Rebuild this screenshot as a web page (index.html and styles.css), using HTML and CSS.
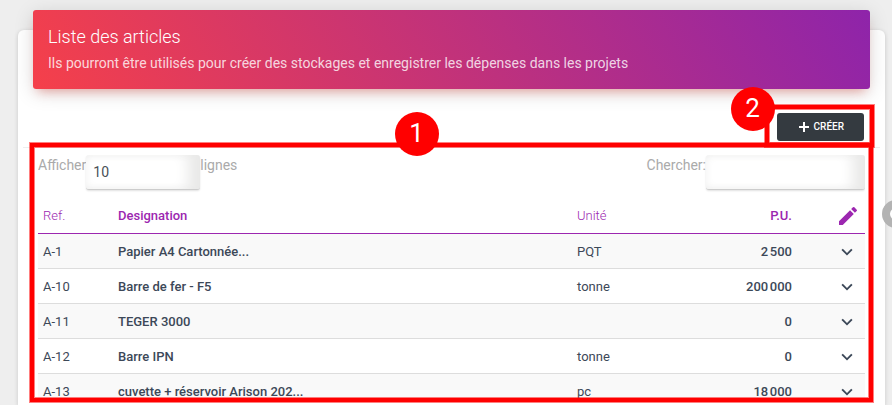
FILE: index.html
```html
<!DOCTYPE html>
<html lang="fr">
<head>
<meta charset="utf-8">
<meta name="viewport" content="width=device-width, initial-scale=1">
<title>Liste des articles</title>
<link rel="stylesheet" href="styles.css">
</head>
<body>
<svg class="symbols">
  <symbol id="chevron" viewBox="0 0 24 24"><path d="M6.4 7.6 12 13.2l5.6-5.6L19.4 9.4 12 16.8 4.6 9.4z"/></symbol>
</svg>
<main class="card">
  <header class="card-header">
    <h1 class="title">Liste des articles</h1>
    <p class="subtitle">Ils pourront être utilisés pour créer des stockages et enregistrer les dépenses dans les projets</p>
  </header>
  <div class="toolbar">
    <div class="create">
      <button class="create-button" type="button">
        <svg class="plus" viewBox="0 0 10 10" aria-hidden="true"><path d="M4 0h2v4h4v2H6v4H4V6H0V4h4z"/></svg>
        CRÉER
      </button>
      <span class="frame frame-create"></span>
      <span class="badge badge-create">2</span>
    </div>
  </div>
  <section class="list">
    <div class="list-content">
      <div class="filters">
        <div class="filter">
          <label for="length">Afficher</label>
          <select class="field length" id="length"><option>10</option><option>25</option></select>
          <span>lignes</span>
        </div>
        <div class="filter">
          <label for="search">Chercher:</label>
          <input class="field search" id="search" type="search">
        </div>
      </div>
      <table class="table">
        <thead>
          <tr>
            <th class="ref">Ref.</th>
            <th class="strong">Designation</th>
            <th class="unit">Unité</th>
            <th class="price strong">P.U.</th>
            <th class="action" aria-label="Modifier"><svg class="pencil" viewBox="0 0 24 24"><path d="M3 17.25V21h3.75L17.81 9.94l-3.75-3.75zM20.71 7.04a1 1 0 0 0 0-1.41l-2.34-2.34a1 1 0 0 0-1.41 0l-1.83 1.83 3.75 3.75z"/></svg></th>
          </tr>
        </thead>
        <tbody>
          <tr><td>A-1</td><td class="strong">Papier A4 Cartonnée...</td><td>PQT</td><td class="price strong">2&#8239;500</td><td class="action"><button class="menu" type="button" aria-label="Actions A-1"><svg class="chevron"><use href="#chevron"/></svg></button></td></tr>
          <tr><td>A-10</td><td class="strong">Barre de fer - F5</td><td>tonne</td><td class="price strong">200&#8239;000</td><td class="action"><button class="menu" type="button" aria-label="Actions A-10"><svg class="chevron"><use href="#chevron"/></svg></button></td></tr>
          <tr><td>A-11</td><td class="strong">TEGER 3000</td><td></td><td class="price strong">0</td><td class="action"><button class="menu" type="button" aria-label="Actions A-11"><svg class="chevron"><use href="#chevron"/></svg></button></td></tr>
          <tr><td>A-12</td><td class="strong">Barre IPN</td><td>tonne</td><td class="price strong">0</td><td class="action"><button class="menu" type="button" aria-label="Actions A-12"><svg class="chevron"><use href="#chevron"/></svg></button></td></tr>
          <tr><td>A-13</td><td class="strong">cuvette + réservoir Arison 202...</td><td>pc</td><td class="price strong">18&#8239;000</td><td class="action"><button class="menu" type="button" aria-label="Actions A-13"><svg class="chevron"><use href="#chevron"/></svg></button></td></tr>
        </tbody>
      </table>
    </div>
    <span class="frame frame-list"></span>
    <span class="badge badge-list">1</span>
  </section>
</main>
<span class="handle"></span>
</body>
</html>
```
FILE: styles.css
```css
* {
  box-sizing: border-box;
}

body {
  margin: 0;
  min-height: 100vh;
  padding: 30px 7px 0 18px;
  display: flex;
  overflow: hidden;
  position: relative;
  background: #eee;
  color: #3c4858;
  font: 400 13px/20px Roboto, sans-serif;
}

.symbols {
  display: none;
}

.card {
  flex: 1;
  min-width: 0;
  padding: 0 5px;
  border-radius: 6px 6px 0 0;
  background: #fff;
  box-shadow: 0 1px 4px rgba(0, 0, 0, .16);
}

.card-header {
  margin: -20px 10px 0;
  padding: 16px 15px 15px;
  border-radius: 3px;
  background: linear-gradient(60deg, #f5404a, #8e24aa);
  box-shadow: 0 4px 20px rgba(0, 0, 0, .14), 0 7px 10px -5px rgba(244, 67, 54, .4);
  color: #fff;
}

.title {
  margin: 0 0 5px;
  font-size: 18px;
  line-height: 22px;
  font-weight: 300;
}

.subtitle {
  margin: 0;
  font-size: 14px;
  line-height: 21px;
  color: rgba(255, 255, 255, .8);
}

.toolbar {
  display: flex;
  justify-content: flex-end;
  padding: 24px 16px 6px;
  border-bottom: 1px solid #eee;
}

.create {
  display: flex;
  position: relative;
  z-index: 2;
}

.create-button {
  display: flex;
  align-items: center;
  gap: 5px;
  height: 28px;
  padding: 0 20px 0 22px;
  border: 0;
  border-radius: 3px;
  background: #343a40;
  color: #fff;
  font: 500 10px/20px Roboto, sans-serif;
}

.plus {
  width: 10px;
  height: 10px;
  fill: #fff;
}

.list {
  position: relative;
  padding: 7px 15px 0;
}

.list-content {
  height: 243px;
  overflow: hidden;
}

.filters {
  display: flex;
  justify-content: space-between;
  height: 43px;
}

.filter {
  display: flex;
  align-items: flex-start;
  color: #aaa;
  font-size: 14px;
}

.field {
  height: 35px;
  padding: 0 7px;
  border: 0;
  border-bottom: 1px solid #ccc;
  border-radius: 3px;
  appearance: none;
  background: #fff;
  box-shadow: inset -18px 0 14px -6px #e9e9e8, inset 0 0 8px #f1f1f1, 0 1px 2px rgba(0, 0, 0, .12);
  color: #495057;
  font: 400 14px/20px Roboto, sans-serif;
}

.length {
  width: 114px;
}

.search {
  width: 159px;
}

.table {
  width: 100%;
  border-collapse: collapse;
  table-layout: fixed;
}

th,
td {
  height: 35px;
  padding: 2px 5px 0;
  border-bottom: 1px solid #ddd;
  text-align: left;
  font-weight: 400;
}

th {
  border-bottom-color: #9c27b0;
  color: #9c27b0;
  font-weight: 300;
}

tbody tr:nth-child(odd) {
  background: #f9f9f9;
}

.strong {
  font-weight: 500;
}

.ref {
  width: 75px;
}

.unit {
  width: 125px;
}

.price {
  width: 100px;
  text-align: right;
}

.action {
  width: 68px;
  text-align: right;
}

.pencil {
  display: block;
  width: 24px;
  height: 24px;
  margin-left: auto;
  fill: #9c27b0;
}

.menu {
  display: block;
  margin-left: auto;
  padding: 0 4px;
  border: 0;
  background: none;
}

.chevron {
  display: block;
  width: 18px;
  height: 18px;
  fill: #3c4858;
}

.frame {
  position: absolute;
  border: 4px solid #f00;
  outline: 1px solid rgba(255, 0, 0, .5);
  box-shadow: inset 0 0 0 1px rgba(255, 0, 0, .5);
  pointer-events: none;
}

.frame-list {
  inset: -5px 7px -4px 7px;
}

.frame-create {
  inset: -8px -10px -6px -12px;
}

.badge {
  position: absolute;
  width: 44px;
  height: 44px;
  border-radius: 50%;
  background: #f00;
  color: #fff;
  font-size: 26px;
  line-height: 42px;
  text-align: center;
}

.badge-list {
  top: -36px;
  left: calc(50% - 57px);
}

.badge-create {
  top: -26px;
  left: -46px;
}

.handle {
  position: absolute;
  top: 200px;
  right: -18px;
  width: 28px;
  height: 28px;
  border: 8px solid #b3b3b3;
  border-radius: 50%;
  background: #fff;
}
```
